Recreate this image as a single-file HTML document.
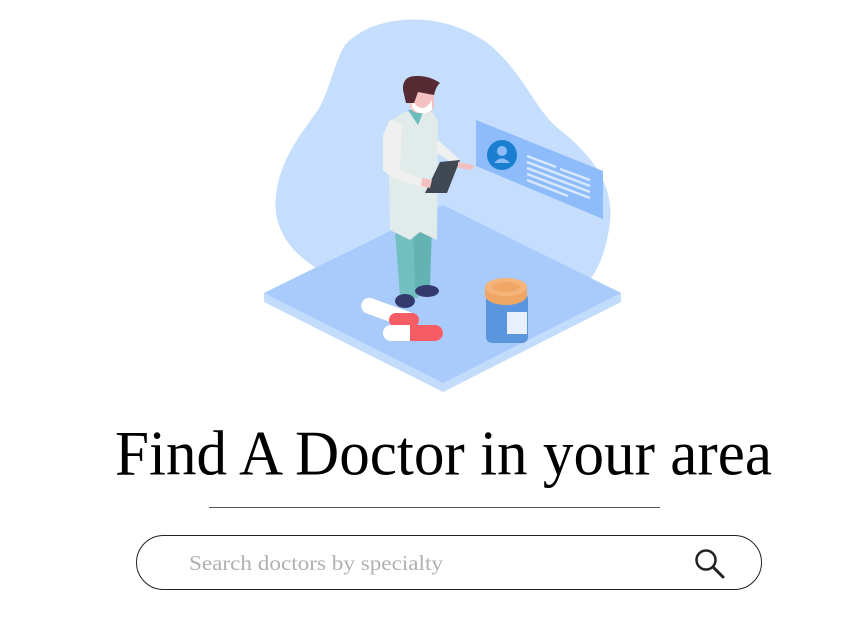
<!DOCTYPE html>
<html><head><meta charset="utf-8"><style>
html,body{margin:0;padding:0;background:#fff;width:852px;height:632px;overflow:hidden;position:relative;font-family:"Liberation Serif",serif}
.line{position:absolute;left:209px;top:507px;width:451px;height:1px;background:#555}
.search{position:absolute;left:136px;top:535px;width:626px;height:55px;border:1px solid #222;border-radius:28px;box-sizing:border-box}
</style></head><body>
<svg width="852" height="632" style="position:absolute;left:0;top:0">
<path d="M345 45 C375 12 445 10 490 45 C525 75 535 110 560 130 C592 155 614 185 610 222 C606 255 595 280 575 295 L320 270 C288 252 272 225 276 195 C280 160 300 135 318 110 C330 90 335 60 345 45 Z" fill="#c5defd"/>
<path d="M264 293 L443 205 L621 293 L621 302 L443 392 L264 302 Z" fill="#c3dcfc"/>
<path d="M264 293 L443 205 L621 293 L443 383 Z" fill="#a8cbfb"/>
<path d="M476 120 L603 171 L603 219 L476 166 Z" fill="#8ebcfb"/>
<circle cx="502" cy="155" r="15" fill="#1a7fd0"/>
<circle cx="502" cy="151" r="5" fill="#8ebcfb"/><path d="M494 163 Q502 154 510 163 Z" fill="#8ebcfb"/>
<g stroke="#d8e8fd" stroke-width="2.5">
<line x1="527" y1="156" x2="556" y2="167"/><line x1="527" y1="162" x2="590" y2="186"/><line x1="527" y1="168" x2="590" y2="192"/><line x1="527" y1="174" x2="590" y2="198"/><line x1="527" y1="180" x2="568" y2="196"/><line x1="560" y1="169" x2="590" y2="180"/>
</g>
<rect x="360" y="305" width="58" height="16" rx="8" fill="#fff" transform="rotate(20 389 313)"/>
<rect x="389" y="313" width="30" height="14" rx="7" fill="#f65c64"/>
<rect x="383" y="325" width="60" height="16" rx="8" fill="#fff"/>
<path d="M410 325 L435 325 A8 8 0 0 1 435 341 L410 341 Z" fill="#f65c64"/>
<rect x="486" y="293" width="42" height="50" rx="6" fill="#5a95dd"/>
<rect x="507" y="312" width="20" height="22" fill="#e8f0fb"/>
<ellipse cx="506" cy="295" rx="21" ry="10" fill="#f0a766"/>
<rect x="485" y="286" width="42" height="10" fill="#f0a766"/>
<ellipse cx="506" cy="287" rx="21" ry="9" fill="#f4b47a"/>
<ellipse cx="506" cy="287" rx="14" ry="5" fill="#f0a766"/>
<path d="M395 230 L415 230 L418 298 L400 298 Z" fill="#72bfbf"/>
<path d="M413 225 L432 225 L430 287 L415 287 Z" fill="#64b3b3"/>
<ellipse cx="405" cy="301" rx="10" ry="7" fill="#333a6e"/>
<ellipse cx="427" cy="291" rx="12" ry="6" fill="#333a6e"/>
<path d="M388 122 L405 112 L432 112 L438 120 L437 240 L420 232 L410 240 L390 230 Z" fill="#e1ebea"/>
<path d="M383 135 L390 120 L402 125 L400 170 L425 180 L424 188 L392 178 L383 170 Z" fill="#f0f0f0"/>
<path d="M438 140 L460 160 L455 165 L436 152 Z" fill="#f0f0f0"/>
<path d="M408 110 L418 125 L424 110 Z" fill="#6bbcbc"/>
<path d="M440 162 L460 160 L447 193 L425 193 Z" fill="#3f4853"/>
<path d="M422 178 L432 180 L430 188 L421 186 Z" fill="#f3c0c0"/>
<path d="M458 162 L474 165 L472 170 L458 168 Z" fill="#f3c0c0"/>
<rect x="410" y="85" width="24" height="28" rx="8" fill="#f5c0c0"/>
<path d="M412 100 Q422 116 432 100 L432 110 Q422 118 412 108 Z" fill="#fff"/>
<path d="M403 90 Q402 75 418 76 Q430 76 440 83 Q436 86 434 95 L418 92 L414 103 L406 103 Z" fill="#552a32"/>
<text x="115" y="475" textLength="657" lengthAdjust="spacingAndGlyphs" font-family="Liberation Serif, serif" font-size="62" fill="#000" transform="translate(0,-10) scale(1,1.02)">Find A Doctor in your area</text>
<text x="189" y="570" textLength="254" lengthAdjust="spacingAndGlyphs" font-family="Liberation Serif, serif" font-size="21" fill="#b0b0b0">Search doctors by specialty</text>
<circle cx="706" cy="560" r="9.5" fill="none" stroke="#222" stroke-width="2.5"/>
<line x1="713" y1="567" x2="723" y2="577" stroke="#222" stroke-width="3" stroke-linecap="round"/>
</svg>
<div class="line"></div>
<div class="search"></div>
</body></html>
